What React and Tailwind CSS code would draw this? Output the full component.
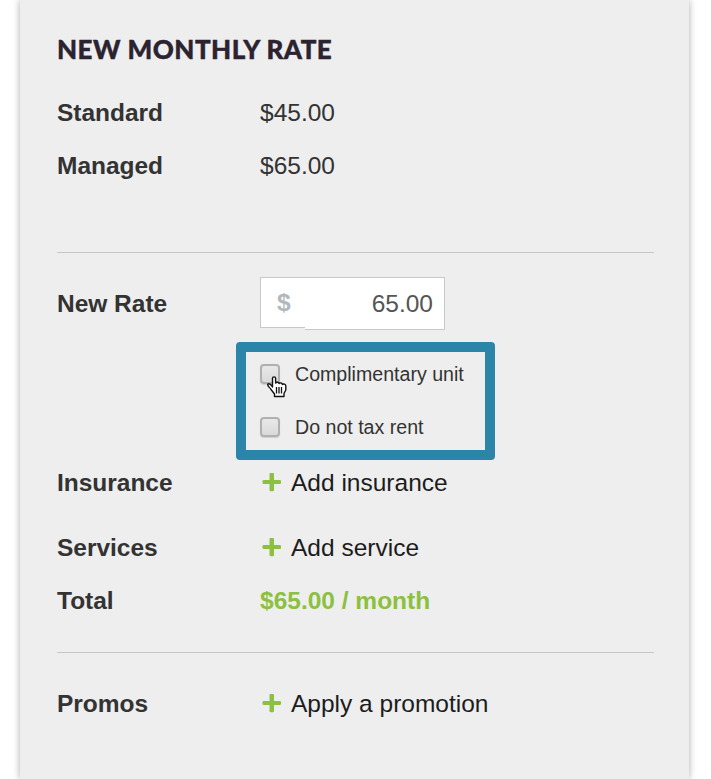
const Plus = () => (
  <svg width="20" height="20" viewBox="0 0 20 20" className="ml-[2px] mr-[9px] shrink-0" fill="#8cc040">
    <rect x="0.500" y="7" width="18.500" height="4" rx="1.300" />
    <rect x="7.500" y="-0.200" width="4.500" height="18.500" rx="1.300" />
  </svg>
);

const Hand = () => (
  <svg width="21" height="22" viewBox="0 0 21 22" className="absolute left-[5px] top-[10px]">
    <path
      d="M5.500 11V2.200C5.500 .4 8.600 .4 8.600 2.200V7C9.500 5.800 11.800 6 12 7.500C13 6.500 15.200 6.800 15.400 8.500C16.500 7.500 18.800 8.200 18.800 10V14L17 17.500V20.500H7.500V18L4 13.500C3 11.500 0 10 .8 8.300C2 6.800 4.500 9 5.500 11Z"
      fill="#fff"
      stroke="#111"
      strokeWidth="1.4"
      strokeLinejoin="round"
    />
    <path d="M9.500 11v6.500M12 11v6.500M14.500 11v6.500" stroke="#111" strokeWidth="1.3" fill="none" />
  </svg>
);

function Row({ label, className, children }) {
  return (
    <div className={"flex items-center " + className}>
      <div className="w-[203px] shrink-0 font-bold tracking-[-0.02px]">{label}</div>
      {children}
    </div>
  );
}

function Check({ label, children }) {
  return (
    <div className="flex h-[53px] items-center">
      <div className="relative h-[20px] w-[20px] rounded-[4px] border-2 border-[#b0b0b0] bg-linear-to-b from-[#e8e8e8] to-[#dadada] shadow-[0_1px_1px_#d0d0d0]">
        {children}
      </div>
      <span className="ml-[15px] text-[19.6px] text-[#333]">{label}</span>
    </div>
  );
}

export default function App() {
  return (
    <div className="h-[779px] overflow-hidden bg-white pl-5 font-['Liberation_Sans',Arial,sans-serif] text-[24.5px] leading-[30px] text-[#333]">
      <div className="h-full w-[669px] bg-[#eee] pl-[37px] pr-[35px] shadow-[0_0_7px_rgba(0,0,0,0.33)]">
        <h1 className="h-[86px] whitespace-nowrap pt-[34px] font-['Lato',sans-serif] text-[26px] font-black tracking-[0.48px] text-[#2b2330] [-webkit-text-stroke:0.4px_#2b2330]">
          NEW MONTHLY RATE
        </h1>
        <Row label="Standard" className="h-[53px]">$45.00</Row>
        <Row label="Managed" className="h-[53px]">$65.00</Row>
        <div className="mt-[60px] border-t border-[#c6c6c6]" />

        <Row label="New Rate" className="mt-[24px] h-[53px]">
          <div className="flex h-[53px] items-start">
            <div className="h-[51px] w-[45px] border border-r-0 border-[#c8c8c8] bg-white pl-4 pt-[10px] font-bold text-[#b0b8bc]">$</div>
            <div className="h-[53px] w-[140px] border border-l-0 border-[#c8c8c8] bg-white pr-[11px] pt-[11px] text-right text-[#555]">65.00</div>
          </div>
        </Row>

        <div className="ml-[179px] mt-[12px] h-[118px] w-[259px] rounded-[4px] bg-[#2b85a8] p-[10px]">
          <div className="h-[98px] bg-[#eee] pl-[14px]">
            <div className="-translate-y-[5px]">
              <Check label="Complimentary unit"><Hand /></Check>
              <Check label="Do not tax rent" />
            </div>
          </div>
        </div>

        <Row label="Insurance" className="mt-[2px] h-[42px]">
          <Plus /><span className="text-[#1c1c1c]">Add insurance</span>
        </Row>
        <Row label="Services" className="mt-[17px] h-[53px]">
          <Plus /><span className="text-[#1c1c1c]">Add service</span>
        </Row>
        <Row label="Total" className="h-[53px]">
          <span className="font-bold text-[#8cc040]">$65.00 / month</span>
        </Row>
        <div className="mt-[25px] border-t border-[#c6c6c6]" />
        <Row label="Promos" className="mt-[24px] h-[53px]">
          <Plus /><span className="text-[#1c1c1c]">Apply a promotion</span>
        </Row>
      </div>
    </div>
  );
}
